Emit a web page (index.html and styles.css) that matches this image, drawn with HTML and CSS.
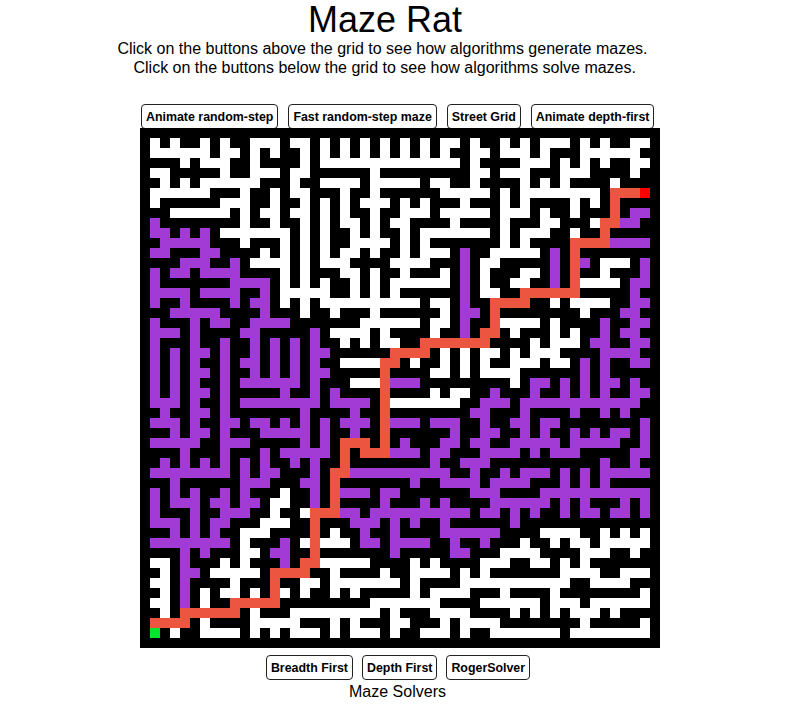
FILE: index.html
```html
<!DOCTYPE html>
<html lang="en">
<head>
    <meta charset="UTF-8">
    <meta name="viewport" content="width=device-width, initial-scale=1.0">
    <title>Maze Rat</title>
    <link rel="stylesheet" href="styles.css">
    <script src="maze.js" defer></script>
</head>
<body>
    <header class="intro">
        <h1>Maze Rat</h1>
        <p>Click on the buttons above the grid to see how algorithms generate mazes.</p>
        <p>&nbsp;Click on the buttons below the grid to see how algorithms solve mazes.</p>
    </header>
    <div class="generators">
        <button class="btn">Animate random-step</button>
        <button class="btn">Fast random-step maze</button>
        <button class="btn">Street Grid</button>
        <button class="btn">Animate depth-first</button>
    </div>
    <div id="maze" class="maze"></div>
    <div class="solvers">
        <button class="btn">Breadth First</button>
        <button class="btn">Depth First</button>
        <button class="btn">RogerSolver</button>
    </div>
    <div class="solvers-label">Maze Solvers</div>
</body>
</html>
```

FILE: styles.css
```css
* {
    box-sizing: border-box;
}
body {
    margin: 0;
    font-family: "Liberation Sans", Arial, sans-serif;
    color: #000;
    background: #fff;
}

.intro {
    width: 770px;
    padding-top: 1px;
    text-align: center;
}
.intro h1 {
    margin: 0;
    font-size: 36px;
    font-weight: normal;
    line-height: 38px;
}
.intro p {
    margin: 0;
    padding-right: 5px;
    font-size: 16px;
    line-height: 19px;
}

.btn {
    height: 25px;
    padding: 0 4px;
    border: 1px solid #222;
    border-radius: 4px;
    background: #fff;
    color: #000;
    font-family: inherit;
    font-size: 12.4px;
    font-weight: bold;
    white-space: nowrap;
}

.generators {
    display: flex;
    gap: 10px;
    margin-top: 27px;
    margin-bottom: -1px;
    padding-left: 141px;
}

.maze {
    display: grid;
    grid-template-columns: repeat(52, 10px);
    grid-auto-rows: 10px;
    width: 520px;
    margin-left: 140px;
}
.cell-wall { background: #000; }
.cell-open { background: #fff; }
.cell-seen { background: #a23bd6; }
.cell-path { background: #ec5640; }
.cell-end { background: #ff0000; }
.cell-start { background: #00e52d; }

.solvers {
    display: flex;
    justify-content: center;
    gap: 9px;
    margin-top: 7px;
    padding-right: 2px;
}
.solvers-label {
    padding-top: 2px;
    padding-right: 3px;
    font-size: 16px;
    line-height: 20px;
    text-align: center;
}
```

FILE: maze.js
```js
// # wall, . open, p visited by solver, r solved path, S end, G start
const rows = [
    "################## ################# #################",
    "#.#.##.#.##...#..# .#.#.#.#.#.#..#.# #.#.#...#.#.##..#",
    "#......#..#.#.##.# .#.#.#.#.#.#.##.. #...#.###......##",
    "####.#...##.####.# ..............#.# ###...#.#.#.##..#",
    "#..#####.##...#..# #####.#########.. #...###...####.##",
    "##.#.#......###.## ....#.....#..##.# ###.#.#.####.####",
    "#......###.##.#..# ##.##.######..... #.#........#rrrS#",
    "#.######...##.##.# .#.#...#.#.###.## #.#.####.#.#r####",
    "###......#.#..#..# .#.##.##...#..... #...#.##.###r#pp#",
    "#p########.##.##.# .#..#.#..####.### #.###..###.rrpp##",
    "#pp#p#p#.......#.# .##.#.##.#....... #.#...##.##r#####",
    "##ppppp###.###.#.# .##....#.#.###### #.#.####rrrrpppp#",
    "#pp###pp####.#.#.# .#..#.##.#...#p## .....#p#r########",
    "####ppp##p#....#.# ...####....###p#. .#####p#rp#...#p#",
    "#p#pp#pppp####.#.# ##..#.##.###.#p#. ###..#p#r##.###p#",
    "#p#######pppp#.#.# .##.#.#......#p#. ##..##p#r....#pp#",
    "#pppp#pppp##p#.... .##.#.#.######p#. .##rrrrrr#####p##",
    "#p##p####p#pp#.#.# ..........#..#p## rrrr##.#....##pp#",
    "###ppppp####p###.# #.###.######.#pp# r########.###pp##",
    "#p###p#pp##pppp### ####......#..#p## r....#.####p##pp#",
    "#ppp#p####pp#####p #....#.####.##p#r r#.###.#.##p#pp##",
    "#p###p##p##p#p#p#p ##.#.#..##rrrrrrr ####.#...#pp##pp#",
    "#p#p#pp#p##p#p#p#p p######rrrr#.#.#. .#.#...####pppp##",
    "#p#p#p##p#pp#p#p#p ##....rr#.##.#.#. ##...#..#p#p##pp#",
    "#p#p#pp#p##p#p#p#p p#####r####..#.#. ...######p#p#####",
    "#p#p#p##p#pppppp#p ###...rppp####### ##.#pp#p#p#pp#p##",
    "#p#p#pp#p#####p##p #p####r####.#..## p###p##p#p#p##pp#",
    "#ppp#p##p#pppppppp #pppp#r.......##p pp#pppppppppppp##",
    "##p##pp#p#######p# ###p##r########pp ###p####p##p#p###",
    "#ppp#p##pp#pp#p#p# p#ppp#rppp#ppp##p ##pp#pp########p#",
    "###p#pp#p###ppppp# p##p##r######p##p p##p#p##p#p#pp#p#",
    "#ppppp##ppp#####p# p#rrr#r#p###pp#pp ##ppppp#ppppp##p#",
    "####p###p###p#pppp p#r#rrrppp#pp###p ppp#p#ppp#####pp#",
    "##p#p#p#p#p#p##p#p ##r########p##ppp ###########p##p##",
    "#pppppppp#p#pp###p #rrpppppppppp##p# #p#ppp#p#p#ppppp#",
    "###p######ppp###pp #r#######p##pppp# pppp###p#p#p#####",
    "#p#p#p##p#p###.##p #rppp#pp#######pp p####ppppppppppp#",
    "#p#ppp#pp#pp#..##p #r####p###p#p#### pppppp#p#p###p#p#",
    "#p###p##ppp##.##.r rrpp#pppppppppp#p p#p#p##p#pp#pp#p#",
    "#ppp#p#pp###...##r ###ppp#p#p##p#### ##p##############",
    "###p#p#p##...####r #.##p##p####ppppp p####....##.#.#.#",
    "#pppppppp#.###p#.r ...#pp#pppp##p##p ###.##.#..#.....#",
    "####p#p###..#pp##r #######p#####pp## #....####...##.##",
    "#..#p###.#.###p#rr .....####.#.####. ..##..#.#.#######",
    "##.#pp#.....#rrrr# #.####.##....#.#. #######....##...#",
    "#..#p####.###r##.. #.......#.####... ........##....###",
    "##.#p#.#..#.#r.#.# #.#.#####.#....## #.####.########.#",
    "#..#p#.##rrrrr#### #####.......####. .....#...#......#",
    "##.#rrrrrr#.###... ......#.###....## ##.#.#.#...#.####",
    "#rrrr#.####.....## #.#.###..###.#... .########.#####.#",
    "#G#.##....#.#.#... #.#...#.##...#.## .......#........#",
    "################## ################# #################"
];

const kinds = {
    "#": "cell-wall",
    ".": "cell-open",
    "p": "cell-seen",
    "r": "cell-path",
    "S": "cell-end",
    "G": "cell-start"
};

const maze = document.getElementById("maze");
rows.forEach(row => {
    [...row.replace(/ /g, "")].forEach(c => {
        const cell = document.createElement("div");
        cell.className = kinds[c];
        maze.append(cell);
    });
});
```
